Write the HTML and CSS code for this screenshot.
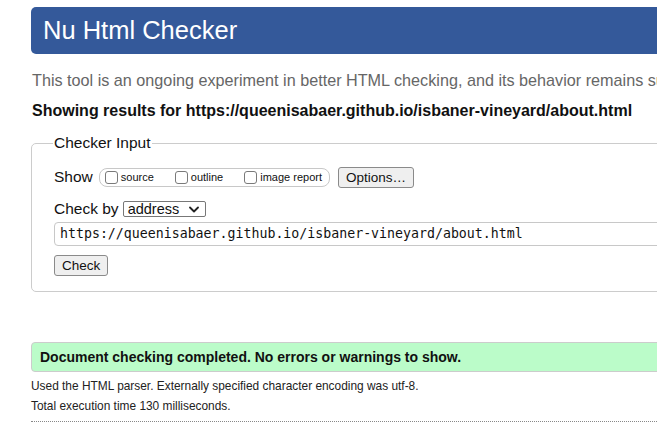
FILE: index.html
```html
<!DOCTYPE html>
<html lang="en">
<head>
<meta charset="utf-8">
<title>Nu Html Checker</title>
<link rel="stylesheet" href="styles.css">
</head>
<body>
<div class="page">
  <h1 class="title">Nu Html Checker</h1>
  <p class="intro">This tool is an ongoing experiment in better HTML checking, and its behavior remains subject to change</p>
  <p class="showing">Showing results for https://queenisabaer.github.io/isbaner-vineyard/about.html</p>
  <fieldset class="checker">
    <legend class="legend">Checker Input</legend>
    <div class="row show-row">
      <span class="label">Show</span>
      <span class="opts">
        <label class="opt"><input type="checkbox" class="cb"><span>source</span></label>
        <label class="opt"><input type="checkbox" class="cb"><span>outline</span></label>
        <label class="opt"><input type="checkbox" class="cb"><span>image report</span></label>
      </span>
      <button class="btn options">Options…</button>
    </div>
    <div class="row by-row">
      <span class="label">Check by</span>
      <span class="select">address
        <svg class="chev" width="10" height="7" viewBox="0 0 10 7"><path d="M1 1.5 L5 5.5 L9 1.5" fill="none" stroke="#222" stroke-width="1.8" stroke-linecap="round" stroke-linejoin="round"/></svg>
      </span>
    </div>
    <div class="url">https://queenisabaer.github.io/isbaner-vineyard/about.html</div>
    <button class="btn check">Check</button>
  </fieldset>
  <div class="success">Document checking completed. No errors or warnings to show.</div>
  <p class="details first">Used the HTML parser. Externally specified character encoding was utf-8.</p>
  <p class="details">Total execution time 130 milliseconds.</p>
  <div class="rule"></div>
</div>
</body>
</html>
```
FILE: styles.css
```css
html, body {
  margin: 0;
  padding: 0;
  background: #fff;
  overflow: hidden;
}
body {
  font-family: "Liberation Sans", Arial, sans-serif;
  color: #111;
}
.page {
  width: 760px;
  padding: 7px 0 0 31px;
}
.title {
  margin: 0;
  height: 47px;
  line-height: 46px;
  background: #34599a;
  border-radius: 5px;
  color: #fff;
  font-size: 25.5px;
  font-weight: normal;
  padding-left: 12px;
}
.intro {
  margin: 17px 0 0 1px;
  font-size: 16.2px;
  line-height: 18px;
  color: #666;
  white-space: nowrap;
}
.showing {
  margin: 13px 0 0 1px;
  font-size: 16px;
  line-height: 18px;
  font-weight: bold;
  white-space: nowrap;
}
.checker {
  margin: 14px 0 0 0;
  border: 1px solid #ccc;
  border-radius: 5px;
  padding: 10px 22px 15px 22px;
  min-width: 0;
}
.legend {
  font-size: 15.5px;
  padding: 0 1px;
  margin-left: -1px;
  color: #111;
}
.row {
  display: flex;
  align-items: center;
}
.show-row {
  margin-top: 4px;
  height: 22px;
}
.label {
  font-size: 15.5px;
}
.opts {
  display: inline-flex;
  align-items: center;
  margin-left: 6px;
  height: 17px;
  border: 1px solid #c8c8c8;
  border-radius: 8px;
  padding: 0 7px 0 4px;
}
.opt {
  display: inline-flex;
  align-items: center;
  font-size: 11px;
  margin-right: 20px;
}
.opt:last-child {
  margin-right: 0;
}
.cb {
  appearance: none;
  -webkit-appearance: none;
  width: 13px;
  height: 13px;
  margin: 0 3px 0 1px;
  border: 1px solid #7a7a7a;
  border-radius: 3px;
  background: #fff;
}
.btn {
  font-family: "Liberation Sans", Arial, sans-serif;
  font-size: 13.5px;
  color: #111;
  background: #efefef;
  border: 1px solid #8a8a8a;
  border-radius: 3px;
  height: 21px;
  padding: 0 7px;
  line-height: 19px;
}
.options {
  margin-left: 8px;
}
.by-row {
  margin-top: 12px;
}
.select {
  display: inline-flex;
  align-items: center;
  justify-content: space-between;
  margin-left: 4px;
  width: 83px;
  height: 16px;
  box-sizing: border-box;
  border: 1px solid #777;
  border-radius: 2px;
  padding: 0 6px 0 4px;
  font-size: 14.5px;
  background: #fff;
}
.chev {
  display: block;
}
.url {
  margin-top: 4px;
  height: 24px;
  box-sizing: border-box;
  border: 1px solid #c8c8c8;
  border-radius: 4px;
  padding: 0 0 0 5px;
  font-family: "DejaVu Sans Mono", "Liberation Mono", monospace;
  font-size: 13.25px;
  line-height: 22px;
  white-space: nowrap;
  width: 700px;
}
.check {
  margin-top: 9px;
  display: block;
}
.success {
  margin-top: 50px;
  height: 30px;
  box-sizing: border-box;
  background: #bbfcc9;
  border: 1px solid #ccc;
  border-radius: 4px;
  padding: 0 0 0 8px;
  font-size: 14px;
  font-weight: bold;
  line-height: 28px;
  white-space: nowrap;
}
.details {
  margin: 0;
  font-size: 11.9px;
  line-height: 20px;
  color: #222;
  white-space: nowrap;
}
.details.first {
  margin-top: 4px;
}
.rule {
  margin-top: 5px;
  border-top: 1px dotted #888;
}
```
